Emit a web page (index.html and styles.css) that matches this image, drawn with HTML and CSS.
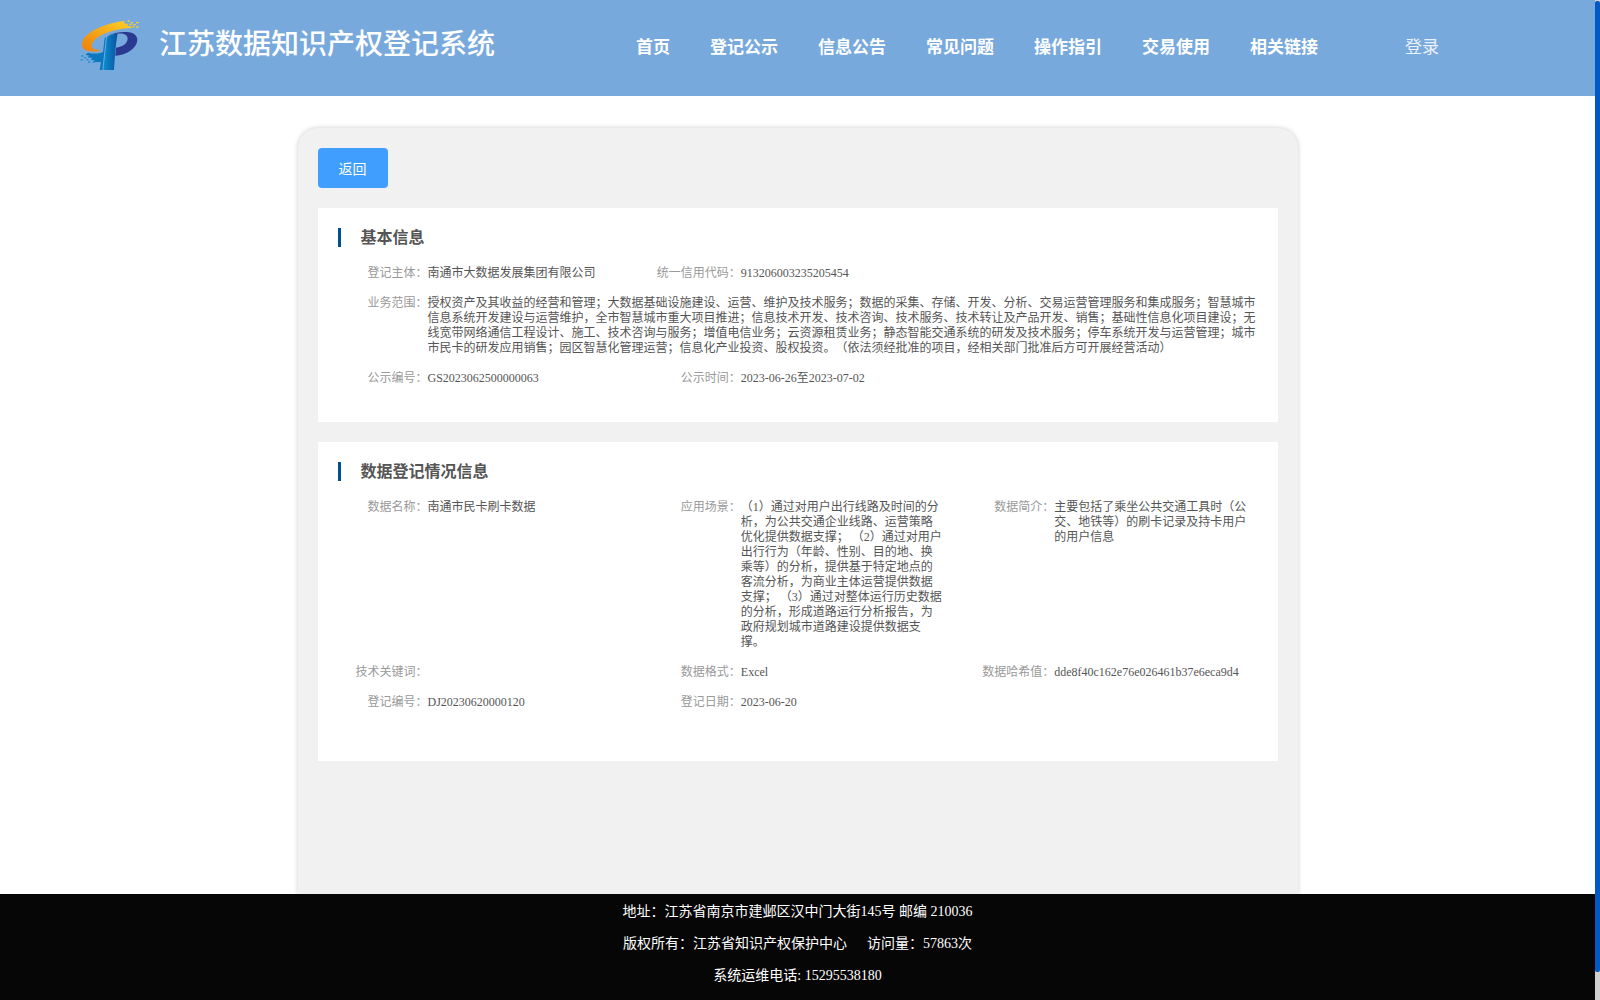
FILE: index.html
```
<!DOCTYPE html>
<html lang="zh-CN">
<head>
    <meta charset="UTF-8">
    <meta name="viewport" content="width=device-width, initial-scale=1.0">
    <title>江苏数据知识产权登记系统</title>
    <link rel="stylesheet" href="styles.css">
</head>
<body>
    <div class="page">
        <header class="header">
            <svg class="logo" viewBox="60 57 180 156">
                <defs>
                    <linearGradient id="orange" x1="0" y1="1" x2="1" y2="0">
                        <stop offset="0" stop-color="#ee7d0c"/>
                        <stop offset="1" stop-color="#fdd225"/>
                    </linearGradient>
                    <linearGradient id="blue" x1="0" y1="0" x2="1" y2="0">
                        <stop offset="0" stop-color="#0a8fd0"/>
                        <stop offset="1" stop-color="#0b51a0"/>
                    </linearGradient>
                </defs>
                <path fill="url(#orange)" d="M194 63C150 66 66 94 66 134C66 148 80 157 116 154L120 149C100 150 94 143 96 134C100 112 150 86 216 84L212 79L202 78L204 72L192 70Z"/>
                <path fill="#2b3990" d="M142 108C160 98 180 95 200 96C222 97 232 107 232 120C230 146 200 165 166 167L168 143C188 140 202 130 203 116C203 104 190 99 172 101C160 102 150 104 142 108Z"/>
                <path fill="url(#blue)" d="M141 111C150 104 160 101 173 101C168 120 164 180 162 210L130 210Z"/>
                <path fill="#0c78bd" d="M134 113L138 112L127 210L119 210L123 186L98 187L104 181L92 180L96 174L82 172L88 167L76 164L84 158C100 162 116 162 129 156Z"/>
                <path fill="#fdd225" d="M203 61h6v4h-6zM213 66h6v4h-6zM228 66h8v4h-8zM208 71h7v4h-7zM220 72h7v4h-7zM217 78h6v4h-6zM229 79h6v4h-6z"/>
                <path fill="#1b93d4" d="M64 166h6v4h-6zM62 178h6v4h-6zM72 171h7v4h-7zM79 177h7v4h-7zM84 184h7v4h-7zM98 184h6v4h-6z"/>
            </svg>
            <h1 class="site-name">江苏数据知识产权登记系统</h1>
            <nav class="nav">
                <a>首页</a>
                <a>登记公示</a>
                <a>信息公告</a>
                <a>常见问题</a>
                <a>操作指引</a>
                <a>交易使用</a>
                <a>相关链接</a>
            </nav>
            <a class="login">登录</a>
        </header>

        <main class="main">
            <button class="back-btn">返回</button>

            <section class="card">
                <h2 class="card-title">基本信息</h2>
                <dl class="info">
                    <div class="item"><dt>登记主体</dt><dd>南通市大数据发展集团有限公司</dd></div>
                    <div class="item span-two"><dt>统一信用代码</dt><dd>913206003235205454</dd></div>
                    <div class="item full"><dt>业务范围</dt><dd>授权资产及其收益的经营和管理；大数据基础设施建设、运营、维护及技术服务；数据的采集、存储、开发、分析、交易运营管理服务和集成服务；智慧城市信息系统开发建设与运营维护，全市智慧城市重大项目推进；信息技术开发、技术咨询、技术服务、技术转让及产品开发、销售；基础性信息化项目建设；无线宽带网络通信工程设计、施工、技术咨询与服务；增值电信业务；云资源租赁业务；静态智能交通系统的研发及技术服务；停车系统开发与运营管理；城市市民卡的研发应用销售；园区智慧化管理运营；信息化产业投资、股权投资。（依法须经批准的项目，经相关部门批准后方可开展经营活动）</dd></div>
                    <div class="item"><dt>公示编号</dt><dd>GS2023062500000063</dd></div>
                    <div class="item"><dt>公示时间</dt><dd>2023-06-26至2023-07-02</dd></div>
                </dl>
            </section>

            <section class="card register">
                <h2 class="card-title">数据登记情况信息</h2>
                <dl class="info">
                    <div class="item"><dt>数据名称</dt><dd>南通市民卡刷卡数据</dd></div>
                    <div class="item"><dt>应用场景</dt><dd>（1）通过对用户出行线路及时间的分析，为公共交通企业线路、运营策略优化提供数据支撑； （2）通过对用户出行行为（年龄、性别、目的地、换乘等）的分析，提供基于特定地点的客流分析，为商业主体运营提供数据支撑； （3）通过对整体运行历史数据的分析，形成道路运行分析报告，为政府规划城市道路建设提供数据支撑。</dd></div>
                    <div class="item"><dt>数据简介</dt><dd>主要包括了乘坐公共交通工具时（公交、地铁等）的刷卡记录及持卡用户的用户信息</dd></div>
                    <div class="item"><dt>技术关键词</dt><dd></dd></div>
                    <div class="item"><dt>数据格式</dt><dd>Excel</dd></div>
                    <div class="item"><dt>数据哈希值</dt><dd>dde8f40c162e76e026461b37e6eca9d4</dd></div>
                    <div class="item"><dt>登记编号</dt><dd>DJ20230620000120</dd></div>
                    <div class="item"><dt>登记日期</dt><dd>2023-06-20</dd></div>
                </dl>
            </section>
        </main>

        <footer class="footer">
            <p>地址：江苏省南京市建邺区汉中门大街145号 邮编 210036</p>
            <p>版权所有：江苏省知识产权保护中心<span class="visits">访问量：57863次</span></p>
            <p>系统运维电话: 15295538180</p>
        </footer>
    </div>
    <div class="scrollbar"><div class="thumb"></div></div>
</body>
</html>
```
FILE: styles.css
```
* {
    margin: 0;
    padding: 0;
    box-sizing: border-box;
}

body {
    display: flex;
    height: 100vh;
    overflow: hidden;
    background: #fff;
    font-family: "Liberation Serif", "Noto Sans CJK SC", serif;
    text-spacing-trim: space-all;
}

.page {
    flex: 1;
    display: flex;
    flex-direction: column;
    height: 100vh;
}

.header {
    display: flex;
    align-items: center;
    flex: none;
    height: 96px;
    padding-left: 80px;
    background: #78a9dd;
    color: #fff;
}

.logo {
    width: 60px;
    height: 52px;
    margin-bottom: 6px;
}

.site-name {
    width: 336px;
    margin: 0 0 6px 19px;
    font-size: 28px;
    line-height: 40px;
    font-weight: 500;
    white-space: nowrap;
}

.nav {
    display: flex;
    gap: 40px;
    margin-left: 141px;
    font-size: 17px;
    line-height: 24px;
    font-weight: bold;
    white-space: nowrap;
}

.login {
    margin-left: 87px;
    font-size: 17px;
    line-height: 24px;
    opacity: 0.85;
}

.main {
    flex: 1;
    min-height: 0;
    width: 1000px;
    margin: 32px auto 0;
    padding: 20px;
    background: #f1f1f1;
    border-radius: 20px 20px 0 0;
    box-shadow: 0 0 5px rgba(0, 0, 0, 0.2);
}

.back-btn {
    display: block;
    width: 70px;
    height: 40px;
    margin-bottom: 20px;
    border: none;
    border-radius: 4px;
    background: #409eff;
    color: #fff;
    font-family: inherit;
    font-size: 14px;
}

.card {
    height: 214px;
    margin-bottom: 20px;
    padding-top: 20px;
    background: #fff;
}

.card.register {
    height: 319px;
}

.card-title {
    height: 19px;
    margin: 0 0 19px 20px;
    padding-left: 20px;
    border-left: 3px solid #00508f;
    color: #555;
    font-size: 16px;
    line-height: 19px;
}

.info {
    display: grid;
    grid-template-columns: repeat(3, 1fr);
    row-gap: 15px;
    width: 940px;
    color: #555;
    font-family: "Liberation Serif", "Noto Sans CJK JP", serif;
    font-size: 12px;
    line-height: 15px;
}

.item {
    display: flex;
    min-width: 0;
}

.span-two {
    grid-column: span 2;
}

.full {
    grid-column: 1 / -1;
}

dt {
    flex: none;
    width: 110px;
    color: #999;
    text-align: right;
}

dt::after {
    content: "：";
}

dd {
    flex: 1;
    min-width: 0;
}

.footer {
    flex: none;
    height: 106px;
    padding-top: 2px;
    background: #060606;
    color: #fff;
    font-size: 14px;
    line-height: 32px;
    text-align: center;
}

.visits {
    margin-left: 20px;
}

.scrollbar {
    width: 5px;
    padding-top: 1px;
    background: #d0d0d0;
}

.thumb {
    height: 971px;
    border-radius: 2px;
    background: #0059c4;
}
```
